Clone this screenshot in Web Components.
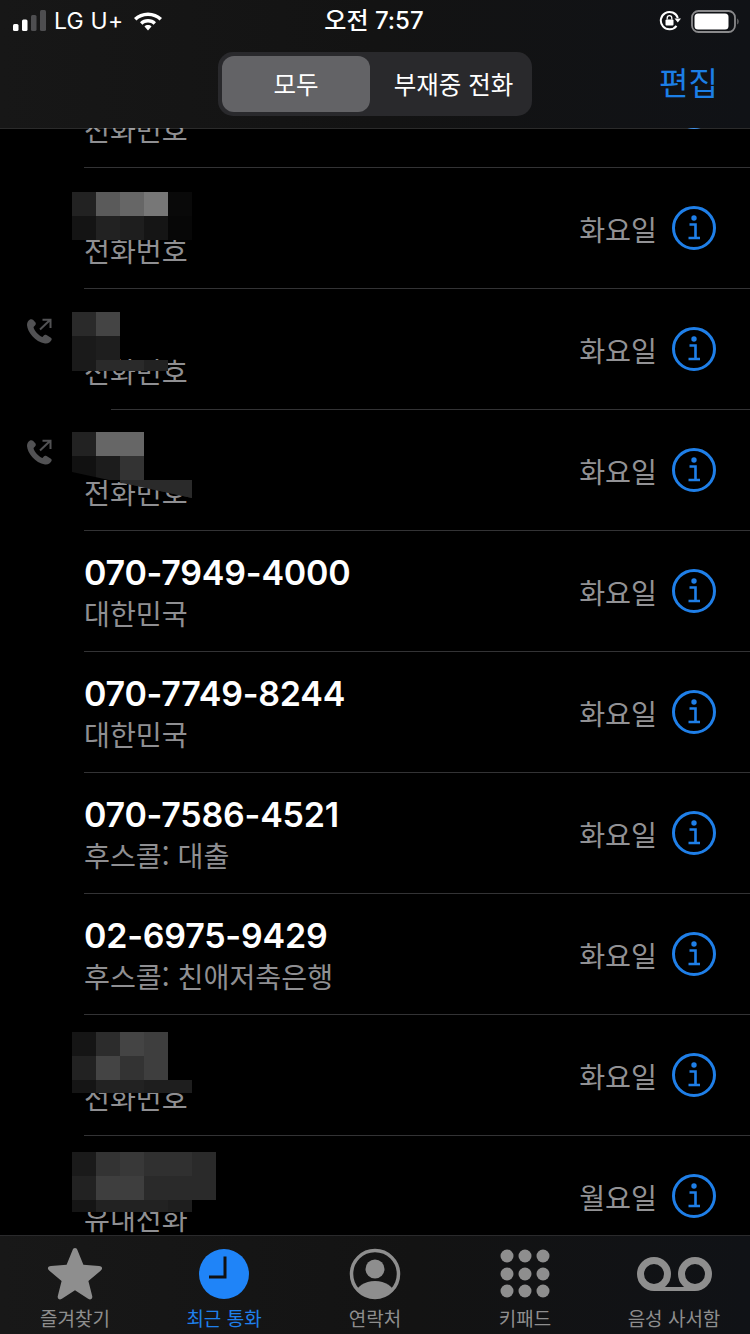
<!DOCTYPE html>
<html lang="ko"><head><meta charset="utf-8"><title>최근 통화</title>
<style>
html,body{margin:0;padding:0;background:#000;}
body{width:750px;height:1334px;overflow:hidden;font-family:Inter,"Noto Sans CJK KR",sans-serif;}
#app{display:flex;flex-direction:column;height:1334px;}
</style></head><body>
<div id="app">
<call-header></call-header>
<call-list>
  <call-row sub="전화번호" day="화요일"></call-row>
  <call-row sub="전화번호" day="화요일"><blot-mosaic slot="over" x="72" y="24" cells="222,5a5a5a,666,777,090909;141414,222,1e1e1e,151515,070707"></blot-mosaic></call-row>
  <call-row sub="전화번호" day="화요일" out="1"><blot-mosaic slot="over" x="72" y="23" h3="11" cells="2a2a2a,444;1a1a1a,1e1e1e;1a1a1a,2a2a2a,2a2a2a,222" clip="polygon(0 0,120px 0,120px 48px,160px 48px,148px 59px,24px 59px,0 59px)"></blot-mosaic><blot-mosaic slot="over" x="84" y="120" cells="000" w="27" h="2"></blot-mosaic></call-row>
  <call-row sub="전화번호" day="화요일" out="1"><blot-mosaic slot="over" x="72" y="22" cells="222,666,666,000,000;111,1c1c1c,333,000,000;000,000,2a2a2a,2a2a2a,2a2a2a" clip="polygon(0 0,72px 0,72px 48px,120px 48px,120px 66px,0 40px)" ></blot-mosaic><blot-mosaic slot="over" x="120" y="70" cells="2a2a2a,2a2a2a,2a2a2a" clip="polygon(0 0,72px 0,72px 18px,0 2px)"></blot-mosaic></call-row>
  <call-row name="070-7949-4000" sub="대한민국" day="화요일"></call-row>
  <call-row name="070-7749-8244" sub="대한민국" day="화요일"></call-row>
  <call-row name="070-7586-4521" sub="후스콜: 대출" day="화요일"></call-row>
  <call-row name="02-6975-9429" sub="후스콜: 친애저축은행" day="화요일"></call-row>
  <call-row sub="전화번호" day="화요일"><blot-mosaic slot="over" x="72" y="17" h3="13" cells="151515,2c2c2c,444,3e3e3e;222,444,333,3e3e3e;151515,222,222,1e1e1e,1e1e1e"></blot-mosaic></call-row>
  <call-row sub="유내선화" day="월요일"><blot-mosaic slot="over" x="72" y="16" h3="12" cells="1a1a1a,333,383838,303030,303030,2a2a2a;222,3e3e3e,3e3e3e,2a2a2a,2a2a2a,2a2a2a;151515,222,222,222,1e1e1e"></blot-mosaic></call-row>
</call-list>
<tab-bar>
  <tab-item label="즐겨찾기"><svg viewBox="0 0 56 52" width="56" height="52"><path fill="#8e8e8e" d="M28 1.500c1.300 0 2 .9 2.500 2.200l5.900 14.600 15.700 1.100c1.500.1 2.600.7 2.900 1.800.3 1.100-.3 2.100-1.400 3L41.400 34.400l3.800 15.200c.3 1.400 0 2.400-.9 3-.9.600-2 .4-3.200-.4L28 43.700 14.900 52.200c-1.200.8-2.300 1-3.200.4-.9-.600-1.200-1.600-.9-3l3.800-15.200L2.400 24.200c-1.100-.9-1.700-1.900-1.400-3 .3-1.100 1.400-1.700 2.900-1.800l15.700-1.100 5.900-14.600C26 2.400 26.700 1.500 28 1.500z" transform="translate(0 -1.500)"/></svg></tab-item>
  <tab-item label="최근 통화" active="1" style="padding-right:2px"><svg viewBox="0 0 56 52" width="56" height="52"><circle cx="28" cy="26" r="25" fill="#1f84f8"/><path d="M29 8.500V29H13" fill="none" stroke="#111" stroke-width="3"/></svg></tab-item>
  <tab-item label="연락처"><svg viewBox="0 0 56 52" width="56" height="52"><defs><clipPath id="c"><circle cx="28" cy="26" r="23"/></clipPath></defs><circle cx="28" cy="26" r="23.500" fill="none" stroke="#8e8e8e" stroke-width="3.500"/><circle cx="28" cy="21" r="9.500" fill="#8e8e8e"/><ellipse cx="28" cy="46" rx="19" ry="13" fill="#8e8e8e" clip-path="url(#c)"/></svg></tab-item>
  <tab-item label="키패드"><svg viewBox="0 0 56 52" width="56" height="52" fill="#8e8e8e"><circle cx="10" cy="8" r="6.500"/><circle cx="28" cy="8" r="6.500"/><circle cx="46" cy="8" r="6.500"/><circle cx="10" cy="26" r="6.500"/><circle cx="28" cy="26" r="6.500"/><circle cx="46" cy="26" r="6.500"/><circle cx="10" cy="43" r="6.500"/><circle cx="28" cy="43" r="6.500"/><circle cx="46" cy="43" r="6.500"/></svg></tab-item>
  <tab-item label="음성 사서함" style="padding-right:2px"><svg viewBox="0 0 76 52" width="76" height="52" fill="none" stroke="#8e8e8e" stroke-width="7"><circle cx="18" cy="26" r="13.500"/><circle cx="59" cy="26" r="13.500"/><path d="M18 41H59" stroke-width="4"/></svg></tab-item>
</tab-bar>
</div>

<script>
const HANGUL='"Noto Sans CJK KR"';
function def(name,html,init){
  customElements.define(name,class extends HTMLElement{
    constructor(){super();this.attachShadow({mode:'open'});}
    connectedCallback(){
      this.shadowRoot.innerHTML=typeof html==='function'?html(this):html;
      if(init)init(this);
    }
  });
}
def('info-icon',`<style>:host{display:block;width:44px;height:44px}svg{display:block}</style>
<svg width="44" height="44" viewBox="0 0 44 44"><circle cx="22" cy="22" r="20.500" fill="none" stroke="#1f7fe8" stroke-width="3"/><circle cx="22" cy="12" r="2.700" fill="#1f7fe8"/><path d="M17.500 18.500H23.500V31M16.500 32H28" fill="none" stroke="#1f7fe8" stroke-width="2.600"/></svg>`);

def('blot-mosaic',h=>{
  const C=24,rows=h.getAttribute('cells').split(';').map(r=>r.split(','));
  const h3=+h.getAttribute('h3')||C, W=+h.getAttribute('w')||0, H=+h.getAttribute('h')||0;
  let out='',y=0,maxw=0;
  rows.forEach((r,i)=>{
    const rh=H||((i===rows.length-1&&rows.length>2)?h3:C);
    r.forEach((c,j)=>{out+=`<rect x="${j*C}" y="${y}" width="${W||C}" height="${rh}" fill="#${c}"/>`;});
    maxw=Math.max(maxw,W||r.length*C); y+=rh;
  });
  const clip=h.getAttribute('clip');
  return `<style>:host{position:absolute;left:${h.getAttribute('x')}px;top:${h.getAttribute('y')}px;${clip?'clip-path:'+clip+';':''}line-height:0}svg{display:block}</style>
  <svg width="${maxw}" height="${y}" shape-rendering="crispEdges">${out}</svg>`;
});

const outIcon=`<svg width="27" height="27" viewBox="0 0 27 27"><path fill="#525254" d="M4 1.500C2 2.500 1 4.500 1 7C1.500 14 9 24 19 25.500C22 26 24.500 24 25.500 22C26 21 25.500 20 24.500 19.500L20.500 17C19.500 16.500 18.500 16.500 17.800 17.500L16.500 19C13 18 8 12.500 7.500 9L9 7.500C10 6.500 10 5.500 9.500 4.500L7 1.800C6 1 5 1 4 1.500Z"/><path d="M14 11.500L24 2M16.500 1.800H24.500V10" fill="none" stroke="#525254" stroke-width="2"/></svg>`;

def('call-row',h=>`<style>
:host{display:flex;position:relative;height:121px;flex:none;}
.lead{width:84px;flex:none;box-sizing:border-box;padding:29px 0 0 26px;line-height:0}
.body{flex:1;min-width:0;display:flex;align-items:center;border-bottom:1px solid #333335;padding-right:34px;box-sizing:border-box;}
.txt{flex:1;min-width:0;display:flex;flex-direction:column;justify-content:flex-end;height:120px;padding-bottom:18px;box-sizing:border-box;}
.name{font:600 34px/41px Inter,${HANGUL},sans-serif;color:#fff;letter-spacing:-.22px;white-space:nowrap;padding-top:1px;margin-bottom:-1px;}
.sub{font:400 28.200px/41px ${HANGUL},sans-serif;color:#8f8f92;white-space:nowrap;}
.day{font:400 28.200px/41px ${HANGUL},sans-serif;color:#929295;margin-right:15px;white-space:nowrap;}
</style>
<div class="lead">${h.getAttribute('out')?outIcon:''}</div>
<div class="body"><div class="txt"><div class="name">${h.getAttribute('name')||''}</div><div class="sub">${h.getAttribute('sub')}</div></div>
<div class="day">${h.getAttribute('day')}</div><info-icon></info-icon></div>
<slot name="over"></slot>`);

def('call-list',`<style>:host{display:block;flex:1;min-height:0;overflow:hidden;background:#000;margin-top:-1px}
.s{margin-top:-81px;display:flex;flex-direction:column}</style><div class="s"><slot></slot></div>`);

def('call-header',`<style>
:host{display:block;flex:none;position:relative;z-index:2;height:129px;box-sizing:border-box;border-bottom:1px solid rgba(255,255,255,.17);background:linear-gradient(90deg,#171717,#131313 50%,#101216) padding-box;color:#fff;}
.status{height:42px;display:flex;align-items:center;font:400 23px/42px Inter,${HANGUL},sans-serif;position:relative;padding:0 11px 0 13px;}
.left{flex:1;display:flex;align-items:center;gap:8px}
.carrier{margin-right:2px;letter-spacing:.2px}
.time{font:500 24px/42px Inter,${HANGUL},sans-serif;margin-right:4px;}
.right{flex:1;display:flex;align-items:center;justify-content:flex-end;gap:9px;}
svg{display:block}
.nav{height:86px;display:flex;align-items:flex-start;padding-top:10px;box-sizing:border-box;position:relative;}
.seg{margin-left:218px;width:314px;height:64px;background:#29292c;border-radius:15px;padding:4px;box-sizing:border-box;display:flex;}
.seg div{display:flex;align-items:center;justify-content:center;font:400 24.500px/54px ${HANGUL},sans-serif;white-space:nowrap;}
.a{width:148px;background:#636366;border-radius:12px;}
.b{flex:1;padding-left:9px;}
.edit{margin-left:127px;font:400 32px/58px ${HANGUL},sans-serif;color:#1c7fe6;width:58px;white-space:nowrap;}
</style>
<div class="status"><div class="left">
<svg width="33" height="22" viewBox="0 0 33 22"><rect x="0" y="14" width="5.500" height="7" rx="1.500" fill="#fff"/><rect x="9" y="9.500" width="5.500" height="11.500" rx="1.500" fill="#fff"/><rect x="18" y="5" width="5.500" height="16" rx="1.500" fill="#4e4e50"/><rect x="27" y="0" width="6" height="21" rx="1.500" fill="#4e4e50"/></svg>
<span class="carrier">LG U+</span>
<svg width="30" height="22" viewBox="0 0 30 22"><path fill="#fff" d="M15 3.500C20.500 3.500 25.300 5.600 29 9L26.600 11.500C23.600 8.700 19.500 7 15 7S6.400 8.700 3.400 11.500L1 9C4.700 5.600 9.500 3.500 15 3.500ZM15 10C18.100 10 21 11.200 23 13.200L20.600 15.700C19.100 14.300 17.200 13.500 15 13.500S10.900 14.300 9.400 15.700L7 13.200C9 11.200 11.900 10 15 10ZM15 16C16.400 16 17.600 16.500 18.500 17.400L15 21.500L11.500 17.400C12.400 16.500 13.600 16 15 16Z" transform="translate(0 -1)"/></svg>
</div>
<div class="time">오전 7:57</div>
<div class="right">
<svg width="23" height="22" viewBox="0 0 23 22" fill="none"><path d="M17.500 15.800A8.700 8.700 0 1 1 18.800 8" stroke="#fff" stroke-width="2"/><path d="M15.500 8.500H22L18.800 12.500Z" fill="#fff"/><rect x="6.500" y="9.500" width="8" height="6" rx="1" fill="#fff"/><path d="M8.200 9.500V8A2.300 2.300 0 0 1 12.800 8V9.500" stroke="#fff" stroke-width="1.300"/></svg>
<svg width="48" height="23" viewBox="0 0 48 23"><rect x="1" y="1" width="43" height="21" rx="6.500" fill="none" stroke="#8a8a8c" stroke-width="1.800"/><rect x="3.500" y="3.500" width="34" height="16" rx="3.500" fill="#fff"/><path d="M46 8.500C47.200 9 47.800 10 47.800 11.500S47.200 14 46 14.500Z" fill="#5a5a5c"/></svg>
</div></div>
<div class="nav"><div class="seg"><div class="a">모두</div><div class="b">부재중 전화</div></div><div class="edit">편집</div></div>`);

def('tab-bar',`<style>:host{display:grid;grid-template-columns:repeat(5,150px);flex:none;height:99px;box-sizing:border-box;border-top:1px solid #2a2a2c;background:linear-gradient(90deg,#181818,#131313 55%,#101216);position:relative;z-index:2;}</style><slot></slot>`);

def('tab-item',h=>`<style>:host{display:flex;flex-direction:column;align-items:center;padding-top:12px;box-sizing:border-box;}
.i{height:52px;display:flex;align-items:center;justify-content:center}svg,::slotted(svg){display:block}
.l{font:400 19px/24px ${HANGUL},sans-serif;margin-top:6px;white-space:nowrap;color:${h.getAttribute('active')?'#1f80ec':'#8e8e8e'};}</style>
<div class="i"><slot></slot></div><div class="l">${h.getAttribute('label')}</div>`);
</script>
</body></html>
